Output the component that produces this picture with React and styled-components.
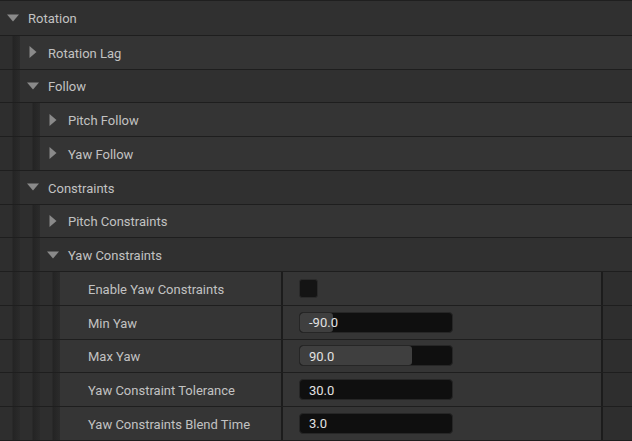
import React from "react";
import styled, { createGlobalStyle } from "styled-components";

const Global = createGlobalStyle`
  html, body { margin: 0; padding: 0; background: #1f1f1f; }
  body { font-family: Roboto, "Noto Sans", "Liberation Sans", sans-serif; }
  #root { width: 632px; height: 441px; overflow: hidden; }
`;

const Panel = styled.div`
  width: 632px;
  height: 441px;
  overflow: hidden;
  background: #1f1f1f;
  padding-top: 1px;
  box-sizing: border-box;
  display: flex;
  flex-direction: column;
`;

const Row = styled.div`
  display: flex;
  flex: none;
  height: ${(p) => (p.$first ? "34.85px" : "33.75px")};
  box-sizing: border-box;
  border-bottom: 1px solid #1e1e1e;
`;

const Indent = styled.div`
  width: 20px;
  flex: none;
  background: linear-gradient(
    to right,
    #2e2e2e 0px,
    #2e2e2e 12px,
    #242424 13px,
    #282828 17px,
    #2b2b2b 20px
  );
`;

const HeaderCell = styled.div`
  flex: 1;
  display: flex;
  align-items: center;
  background: ${(p) => (p.$open ? "#303030" : "#343434")};
`;

const ArrowBox = styled.div`
  width: 28px;
  flex: none;
  display: flex;
  align-items: center;
  padding-left: ${(p) => (p.$open ? "7px" : "9px")};
  box-sizing: border-box;
`;

const Label = styled.span`
  font-size: 13px;
  color: #c2c2c2;
  white-space: nowrap;
  padding-top: 2px;
`;

const NameCell = styled.div`
  width: 221px;
  flex: none;
  display: flex;
  align-items: center;
  padding-left: 28px;
  box-sizing: border-box;
  background: #353535;
`;

const Divider = styled.div`
  width: 2px;
  flex: none;
  background: #1c1c1c;
`;

const ValueCell = styled.div`
  width: 318px;
  flex: none;
  display: flex;
  align-items: center;
  padding-left: 16px;
  box-sizing: border-box;
  background: #353535;
`;

const RightStrip = styled.div`
  flex: 1;
  background: #2e2e2e;
`;

const Checkbox = styled.div`
  width: 19px;
  height: 19px;
  box-sizing: border-box;
  border-radius: 3px;
  background: #141414;
  border: 1px solid #2a2a2a;
`;

const NumberBox = styled.div`
  position: relative;
  width: 154px;
  height: 21px;
  box-sizing: border-box;
  border-radius: 4px;
  background: #0f0f0f;
  border: 1px solid #262626;
  display: flex;
  align-items: center;
  overflow: hidden;
`;

const Fill = styled.div`
  position: absolute;
  left: 0;
  top: 0;
  bottom: 0;
  background: #3f3f3f;
  border-radius: 3px;
`;

const NumberText = styled.span`
  position: relative;
  padding-left: 9px;
  padding-top: 1px;
  font-size: 13px;
  color: #e2e2e2;
`;

const Arrow = ({ open }) =>
  open ? (
    <svg width="12" height="8" viewBox="0 0 12 8">
      <polygon points="0,0.5 12,0.5 6,7.5" fill="#8a8a8a" />
    </svg>
  ) : (
    <svg width="8" height="12" viewBox="0 0 8 12">
      <polygon points="0.5,0 7.5,6 0.5,12" fill="#8a8a8a" />
    </svg>
  );

const rows = [
  { depth: 0, label: "Rotation", type: "group", open: true },
  { depth: 1, label: "Rotation Lag", type: "group", open: false },
  { depth: 1, label: "Follow", type: "group", open: true },
  { depth: 2, label: "Pitch Follow", type: "group", open: false },
  { depth: 2, label: "Yaw Follow", type: "group", open: false },
  { depth: 1, label: "Constraints", type: "group", open: true },
  { depth: 2, label: "Pitch Constraints", type: "group", open: false },
  { depth: 2, label: "Yaw Constraints", type: "group", open: true },
  { depth: 3, label: "Enable Yaw Constraints", type: "check" },
  { depth: 3, label: "Min Yaw", type: "number", value: "-90.0", fill: 0.22 },
  { depth: 3, label: "Max Yaw", type: "number", value: "90.0", fill: 0.735 },
  { depth: 3, label: "Yaw Constraint Tolerance", type: "number", value: "30.0" },
  { depth: 3, label: "Yaw Constraints Blend Time", type: "number", value: "3.0" },
];

export default function App() {
  return (
    <>
      <Global />
      <Panel>
        {rows.map((r, i) => (
          <Row key={i} $first={i === 0}>
            {Array.from({ length: r.depth }).map((_, k) => (
              <Indent key={k} />
            ))}
            {r.type === "group" ? (
              <HeaderCell $open={r.open}>
                <ArrowBox $open={r.open}>
                  <Arrow open={r.open} />
                </ArrowBox>
                <Label>{r.label}</Label>
              </HeaderCell>
            ) : (
              <>
                <NameCell>
                  <Label>{r.label}</Label>
                </NameCell>
                <Divider />
                <ValueCell>
                  {r.type === "check" ? (
                    <Checkbox />
                  ) : (
                    <NumberBox>
                      {r.fill ? <Fill style={{ width: `${r.fill * 100}%` }} /> : null}
                      <NumberText>{r.value}</NumberText>
                    </NumberBox>
                  )}
                </ValueCell>
                <Divider />
                <RightStrip />
              </>
            )}
          </Row>
        ))}
      </Panel>
    </>
  );
}
